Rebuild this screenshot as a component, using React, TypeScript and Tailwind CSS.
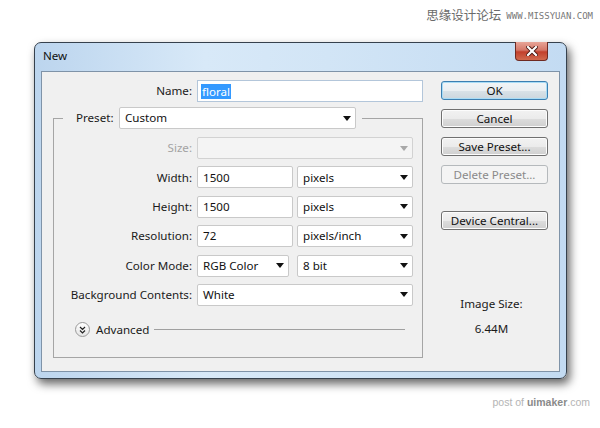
import type { ReactNode } from "react";

function Arrow({ disabled = false }: { disabled?: boolean }) {
  return (
    <svg width="8" height="5" viewBox="0 0 8 5" className="shrink-0">
      <polygon points="0,0 8,0 4,5" fill={disabled ? "#a8a8a8" : "#111"} />
    </svg>
  );
}

function Select({
  value,
  width,
  disabled = false,
}: {
  value?: string;
  width: string;
  disabled?: boolean;
}) {
  return (
    <div
      className={`flex h-[22px] items-center justify-between rounded-[2px] border pl-[5px] pr-[4px] ${width} ${
        disabled
          ? "border-[#d2d2d2] bg-[#f4f4f4]"
          : "border-[#c9c9c9] bg-white"
      }`}
    >
      <span className="text-[11.6px] leading-none text-[#111]">{value}</span>
      <Arrow disabled={disabled} />
    </div>
  );
}

function Field({ value, width }: { value: string; width: string }) {
  return (
    <div
      className={`flex h-[22px] items-center rounded-[2px] border border-[#c9c9c9] bg-white pl-[5px] ${width}`}
    >
      <span className="text-[11.6px] leading-none text-[#111]">{value}</span>
    </div>
  );
}

function Row({
  label,
  dim = false,
  children,
}: {
  label: string;
  dim?: boolean;
  children: ReactNode;
}) {
  return (
    <div className="flex h-[22px] items-center">
      <div
        className={`w-[138px] text-right text-[11.6px] ${
          dim ? "text-[#a3a3a3]" : "text-[#1a1a1a]"
        }`}
      >
        {label}
      </div>
      <div className="ml-[5px] flex items-center">{children}</div>
    </div>
  );
}

function Button({
  label,
  primary = false,
  disabled = false,
}: {
  label: string;
  primary?: boolean;
  disabled?: boolean;
}) {
  const look = disabled
    ? "border-[#b5b9bc] bg-[#f4f4f4] text-[#8a8a8a]"
    : primary
      ? "border-[#3c7fb1] bg-[linear-gradient(180deg,#f2f5f7_0%,#eaeff2_50%,#d9e2e8_51%,#cbd6dd_100%)] text-[#111] shadow-[inset_0_0_0_1px_#a8dcf6]"
      : "border-[#707070] bg-[linear-gradient(180deg,#f2f2f2_0%,#ebebeb_50%,#dddddd_51%,#cfcfcf_100%)] text-[#111] shadow-[inset_0_0_0_1px_#fcfcfc]";
  return (
    <div
      className={`flex h-[19px] w-[107px] items-center justify-center rounded-[3px] border text-[11.6px] leading-none ${look}`}
    >
      {label}
    </div>
  );
}

export default function App() {
  return (
    <div className="flex h-[428px] w-[600px] flex-col overflow-hidden bg-white font-['Noto_Sans',sans-serif]">
      <div className="flex h-[42px] items-start justify-end pr-[7px] pt-[7px]">
        <span className="font-['Noto_Sans_CJK_SC',sans-serif] text-[12.5px] leading-[16px] text-[#6a6a6a]">
          思缘设计论坛
        </span>
        <span className="ml-[5px] mt-[4px] font-['DejaVu_Sans_Mono',monospace] text-[9px] leading-[10px] text-[#777]">
          WWW.MISSYUAN.COM
        </span>
      </div>

      <div className="ml-[34px] flex h-[337px] w-[533px] flex-col rounded-[7px] border border-[#36414d] bg-[linear-gradient(90deg,#bcd5ee_0%,#d8e9f8_32%,#d2e5f6_55%,#c3dbf2_100%)] px-[6px] pb-[6px] shadow-[3px_5px_10px_rgba(0,0,0,0.6)]">
        <div className="flex h-[28px] items-start justify-between">
          <span className="pl-[2px] pt-[6px] text-[11.6px] leading-[14px] text-[#111]">
            New
          </span>
          <div className="-mt-px mr-[12px] flex h-[19px] w-[33px] items-center justify-center rounded-b-[4px] border border-t-0 border-[#6e2a22] bg-[linear-gradient(180deg,#e8a497_0%,#d47768_45%,#c2402c_55%,#d06a4e_100%)]">
            <svg width="12" height="10" viewBox="0 0 12 10">
              <path d="M2 1 L10 9 M10 1 L2 9" stroke="#4a1710" strokeWidth="4" strokeLinecap="square" />
              <path d="M2 1 L10 9 M10 1 L2 9" stroke="#fff" strokeWidth="2.2" strokeLinecap="square" />
            </svg>
          </div>
        </div>

        <div className="flex flex-1 border border-[#7f93a8] bg-[#f0f0f0]">
          <div className="flex flex-col pl-[11px] pt-[8px]">
            <div className="flex h-[22px] items-center">
              <div className="w-[139px] text-right text-[11.6px] text-[#1a1a1a]">
                Name:
              </div>
              <div className="ml-[5px] flex h-[22px] w-[226px] items-center border border-[#b3c6da] bg-white pl-[3px]">
                <span className="bg-[#3399ff] px-px text-[11.6px] leading-[15px] text-white">
                  floral
                </span>
              </div>
            </div>

            <div className="mt-[5px] flex w-[370px] flex-col">
              <div className="flex h-[22px]">
                <div className="h-[11px] w-[10px] self-end border-l border-t border-[#a5a5a5]" />
                <div className="ml-[13px] flex w-[43px] items-center text-[11.6px] text-[#1a1a1a]">
                  Preset:
                </div>
                <Select value="Custom" width="w-[237px]" />
                <div className="ml-[6px] h-[11px] flex-1 self-end border-r border-t border-[#a5a5a5]" />
              </div>

              <div className="flex flex-col gap-[7.4px] border-b border-l border-r border-[#a5a5a5] pb-[19px] pt-[8px]">
                <Row label="Size:" dim>
                  <Select width="w-[216px]" disabled />
                </Row>
                <Row label="Width:">
                  <Field value="1500" width="w-[96px]" />
                  <div className="ml-[4px]">
                    <Select value="pixels" width="w-[116px]" />
                  </div>
                </Row>
                <Row label="Height:">
                  <Field value="1500" width="w-[96px]" />
                  <div className="ml-[4px]">
                    <Select value="pixels" width="w-[116px]" />
                  </div>
                </Row>
                <Row label="Resolution:">
                  <Field value="72" width="w-[96px]" />
                  <div className="ml-[4px]">
                    <Select value="pixels/inch" width="w-[116px]" />
                  </div>
                </Row>
                <Row label="Color Mode:">
                  <Select value="RGB Color" width="w-[92px]" />
                  <div className="ml-[8px]">
                    <Select value="8 bit" width="w-[116px]" />
                  </div>
                </Row>
                <Row label="Background Contents:">
                  <Select value="White" width="w-[216px]" />
                </Row>

                <div className="mt-[8.6px] flex h-[16px] items-center">
                  <div className="ml-[21px] flex h-[15px] w-[15px] items-center justify-center rounded-full border border-[#9a9a9a] bg-[linear-gradient(180deg,#ffffff_0%,#e4e4e4_100%)]">
                    <svg width="7" height="8" viewBox="0 0 7 8">
                      <path d="M1 1 L3.5 3.5 L6 1 M1 4.5 L3.5 7 L6 4.5" stroke="#222" strokeWidth="1.2" fill="none" />
                    </svg>
                  </div>
                  <span className="ml-[6px] text-[11.6px] text-[#1a1a1a]">Advanced</span>
                  <div className="ml-[5px] mr-[17px] h-px flex-1 bg-[#a0a0a0]" />
                </div>
              </div>
            </div>
          </div>

          <div className="ml-[18px] flex w-[107px] flex-col pt-[9px]">
            <Button label="OK" primary />
            <div className="mt-[9px]">
              <Button label="Cancel" />
            </div>
            <div className="mt-[9px]">
              <Button label="Save Preset..." />
            </div>
            <div className="mt-[9px]">
              <Button label="Delete Preset..." disabled />
            </div>
            <div className="mt-[27px]">
              <Button label="Device Central..." />
            </div>
            <div className="mt-[66px] pr-[6px] text-center text-[11.6px] leading-[16px] text-[#1a1a1a]">
              Image Size:
            </div>
            <div className="mt-[9px] pr-[6px] text-center text-[11.6px] leading-[16px] text-[#1a1a1a]">
              6.44M
            </div>
          </div>
        </div>
      </div>

      <div className="mt-[17px] flex justify-end pr-[10px] font-['Liberation_Sans',sans-serif] text-[10.5px] leading-[13px] text-[#b4b4b4]">
        <span>
          post of <span className="font-bold text-[#8a8a8a]">uimaker</span>.com
        </span>
      </div>
    </div>
  );
}
